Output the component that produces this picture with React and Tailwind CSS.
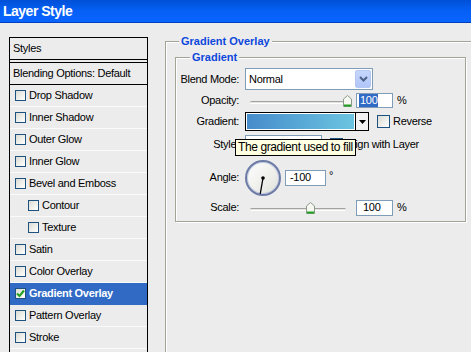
import React from 'react';

const styleList = [
    { name: 'Drop Shadow' },
    { name: 'Inner Shadow' },
    { name: 'Outer Glow' },
    { name: 'Inner Glow' },
    { name: 'Bevel and Emboss' },
    { name: 'Contour', indent: true },
    { name: 'Texture', indent: true },
    { name: 'Satin' },
    { name: 'Color Overlay' },
    { name: 'Gradient Overlay', checked: true, active: true },
    { name: 'Pattern Overlay' },
    { name: 'Stroke' },
];

const Check = ({ checked, size = 'w-[11px] h-[11px]' }) => (
    <div className={`${size} shrink-0 border border-[#1c5180] bg-gradient-to-br from-[#dcdcd4] to-white flex items-center justify-center`}>
        {checked && (
            <svg width="9" height="9" viewBox="0 0 9 9">
                <path d="M1 4.5 L3.5 7 L8 1.5" stroke="#21a121" strokeWidth="2" fill="none" />
            </svg>
        )}
    </div>
);

const Thumb = () => (
    <svg width="9" height="12" viewBox="0 0 9 12">
        <path d="M0.5 4 L4.5 0.5 L8.5 4 V11.5 H0.5 Z" fill="#f7f7f2" stroke="#8a9a8a" />
        <rect x="1" y="9.5" width="7" height="2" fill="#21a121" />
    </svg>
);

const Slider = ({ pos, h }) => (
    <div className={`relative w-[106px] ${h}`}>
        <div className="absolute left-[4px] right-[6px] top-1/2 h-[3px] border-t border-[#a3a3a3] border-b border-b-white bg-[#e4e4dc] rounded-sm" />
        <div className="absolute top-1/2 -translate-y-1/2" style={{ left: pos }}>
            <Thumb />
        </div>
    </div>
);

const Label = ({ children }) => (
    <div className="w-[64px] shrink-0 text-right pr-[1px]">{children}</div>
);

const App = () => {
    return (
        <div className="w-[471px] h-[352px] overflow-hidden bg-[#ececec] text-[11px] leading-[13px] tracking-[-0.3px] text-black font-['Liberation_Sans',Arial,sans-serif]">
            <div className="h-[23px] bg-gradient-to-b from-[#0150d6] via-[#0660f6] to-[#0a64ff] border-b border-[#0040c0] flex items-center pl-[3px]">
                <span className="text-white font-bold text-[14px] tracking-[-0.5px]">Layer Style</span>
            </div>

            <div className="flex items-start">
                {/* styles list */}
                <div className="shrink-0 ml-[9px] mt-[14px] w-[139px] h-[330px] border border-black">
                    <div className="h-[22px] flex items-center pl-[3px] border-b border-black">Styles</div>
                    <div className="h-[2px]" />
                    <div className="h-[23px] flex items-center pl-[3px] border-t border-b border-black">Blending Options: Default</div>
                    {styleList.map((s) => (
                        <div
                            key={s.name}
                            className={`h-[22px] flex items-center gap-[3px] border-b ${s.indent ? 'pl-[18px]' : 'pl-[5px]'} ${s.active ? 'bg-[#316ac5] text-white font-bold border-[#316ac5]' : 'border-[#fafafa]'}`}
                        >
                            <Check checked={s.checked} />
                            <span>{s.name}</span>
                        </div>
                    ))}
                </div>

                {/* gradient overlay group */}
                <fieldset className="shrink-0 ml-[17px] mt-[12px] w-[320px] h-[330px] border border-[#a4a496] shadow-[inset_1px_1px_0_#fff] px-[9px]">
                    <legend className="ml-[4px] px-[2px] bg-[#ececec] font-bold text-[#0d47dc] tracking-[0px]">Gradient Overlay</legend>

                    <fieldset className="mt-[3px] w-[291px] border border-[#a4a496] shadow-[inset_1px_1px_0_#fff,1px_1px_0_#fff] pb-[5px]">
                        <legend className="ml-[14px] px-[2px] bg-[#ececec] font-bold text-[#0d47dc] tracking-[0px]">Gradient</legend>

                        <div className="mt-[4px] h-[22px] flex items-center">
                            <Label>Blend Mode:</Label>
                            <div className="ml-[5px] w-[128px] h-[22px] border border-[#7f9db9] bg-white flex items-center">
                                <span className="flex-1 pl-[3px]">Normal</span>
                                <div className="w-[16px] h-[18px] mr-[1px] rounded-[2px] bg-gradient-to-b from-[#c6d6fc] to-[#b0c6f8] border border-[#b5c8f2] flex items-center justify-center">
                                    <svg width="9" height="6" viewBox="0 0 9 6">
                                        <path d="M1 1 L4.5 4.5 L8 1" stroke="#4d6185" strokeWidth="2" fill="none" />
                                    </svg>
                                </div>
                            </div>
                        </div>

                        <div className="mt-[3px] h-[15px] flex items-center">
                            <Label>Opacity:</Label>
                            <div className="ml-[6px]">
                                <Slider pos={97} h="h-[15px]" />
                            </div>
                            <div className="ml-[4px] w-[37px] h-[15px] border border-[#7f9db9] bg-white flex items-center pl-[2px]">
                                <span className="bg-[#316ac5] text-white px-[1px]">100</span>
                            </div>
                            <span className="ml-[4px]">%</span>
                        </div>

                        <div className="mt-[4px] h-[19px] flex items-center">
                            <Label>Gradient:</Label>
                            <div className="ml-[5px] w-[124px] h-[19px] border border-black flex bg-white">
                                <div className="flex-1 m-[1px] bg-gradient-to-r from-[#478ccb] to-[#6bc4e0]" />
                                <div className="w-[13px] border-l border-black bg-[#f2f2f2] flex items-center justify-center">
                                    <svg width="7" height="4" viewBox="0 0 7 4">
                                        <path d="M0 0 H7 L3.5 4 Z" fill="#000" />
                                    </svg>
                                </div>
                            </div>
                            <div className="ml-[8px]">
                                <Check size="w-[13px] h-[13px]" />
                            </div>
                            <span className="ml-[3px]">Reverse</span>
                        </div>

                        <div className="relative mt-[4px] h-[19px] flex items-center">
                            <Label>Style:</Label>
                            <div className="ml-[5px] w-[77px] h-[19px] border border-[#7f9db9] bg-white" />
                            <div className="ml-[8px]">
                                <Check size="w-[13px] h-[13px]" />
                            </div>
                            <span className="ml-[3px]">Align with Layer</span>
                            <div className="absolute left-[59px] top-[4px] h-[17px] border border-black bg-[#ffffe1] flex items-center px-[2px] text-[12px] tracking-[-0.4px] whitespace-nowrap">
                                The gradient used to fill
                            </div>
                        </div>

                        <div className="mt-[6px] h-[35px] flex items-center">
                            <Label>Angle:</Label>
                            <div className="ml-[5px] w-[36px] h-[36px] rounded-full border-2 border-[#6d7ca6] bg-gradient-to-br from-white to-[#e2e2dc] shadow-[inset_0_0_0_1px_#c3cbe0]">
                                <svg width="32" height="32" viewBox="0 0 32 32">
                                    <line x1="16" y1="16" x2="13.2" y2="32" stroke="#000" strokeWidth="1.3" />
                                    <circle cx="16" cy="16" r="1.8" fill="#000" />
                                </svg>
                            </div>
                            <div className="ml-[4px] w-[41px] h-[16px] border border-[#7f9db9] bg-white flex items-center pl-[4px]">-100</div>
                            <span className="ml-[3px] self-start mt-[9px]">°</span>
                        </div>

                        <div className="mt-[4px] h-[17px] flex items-center">
                            <Label>Scale:</Label>
                            <div className="ml-[6px]">
                                <Slider pos={60} h="h-[17px]" />
                            </div>
                            <div className="ml-[4px] w-[37px] h-[16px] border border-[#7f9db9] bg-white flex items-center pl-[6px]">100</div>
                            <span className="ml-[4px]">%</span>
                        </div>
                    </fieldset>
                </fieldset>
            </div>
        </div>
    );
};

export default App;
